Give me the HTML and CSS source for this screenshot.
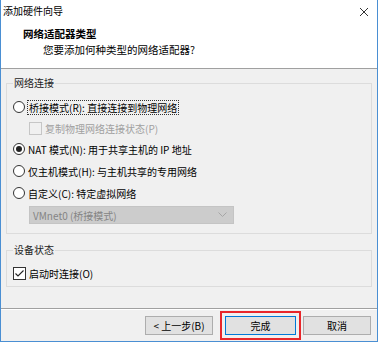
FILE: index.html
```html
<!DOCTYPE html>
<html lang="zh-CN">
<head>
    <meta charset="UTF-8">
    <meta name="viewport" content="width=device-width, initial-scale=1.0">
    <title>添加硬件向导</title>
    <link rel="stylesheet" href="styles.css">
</head>
<body>
<div class="window">
    <!-- Title bar -->
    <div class="titlebar">
        <span class="title">添加硬件向导</span>
        <svg class="close" width="10" height="10" viewBox="0 0 10 10">
            <path d="M1 1 L9 9 M9 1 L1 9" stroke="#333" stroke-width="1" fill="none"/>
        </svg>
    </div>

    <!-- Wizard header -->
    <div class="header">
        <div class="header-title">网络适配器类型</div>
        <div class="header-sub">您要添加何种类型的网络适配器?</div>
    </div>

    <div class="content">
        <fieldset class="group group-net">
            <legend>网络连接</legend>
            <div class="row">
                <span class="radio"></span>
                <span class="label focus">桥接模式(R): 直接连接到物理网络</span>
            </div>
            <div class="row row-sub">
                <span class="check disabled"></span>
                <span class="label disabled-text">复制物理网络连接状态(P)</span>
            </div>
            <div class="row">
                <span class="radio checked"></span>
                <span class="label">NAT 模式(N): 用于共享主机的 IP 地址</span>
            </div>
            <div class="row">
                <span class="radio"></span>
                <span class="label">仅主机模式(H): 与主机共享的专用网络</span>
            </div>
            <div class="row">
                <span class="radio"></span>
                <span class="label">自定义(C): 特定虚拟网络</span>
            </div>
            <div class="select">
                <span>VMnet0 (桥接模式)</span>
                <svg width="9" height="6" viewBox="0 0 9 6">
                    <path d="M0.5 0.5 L4.5 4.5 L8.5 0.5" stroke="#a6a6a6" stroke-width="1" fill="none"/>
                </svg>
            </div>
        </fieldset>

        <fieldset class="group group-dev">
            <legend>设备状态</legend>
            <div class="row row-dev">
                <span class="check">
                    <svg width="11" height="11" viewBox="0 0 11 11">
                        <path d="M1.5 5.5 L4 8 L9.5 2.5" stroke="#222" stroke-width="1.1" fill="none"/>
                    </svg>
                </span>
                <span class="label">启动时连接(O)</span>
            </div>
        </fieldset>
    </div>

    <div class="footer">
        <button class="btn btn-back">&lt; 上一步(B)</button>
        <button class="btn btn-default">完成</button>
        <button class="btn">取消</button>
    </div>
</div>
</body>
</html>
```

FILE: styles.css
```css
body {
    margin: 0;
    font-family: "Noto Sans CJK SC", "Liberation Sans", sans-serif;
    font-size: 10px;
    color: #000;
    background: #fff;
}
.window {
    width: 376px;
    height: 341px;
    border: 1px solid #4a8fd3;
    border-top: none;
    background: #f0f0f0;
    display: flex;
    flex-direction: column;
}
.titlebar {
    height: 23px;
    background: #fff;
    display: flex;
    align-items: center;
    justify-content: space-between;
    padding: 0 8px 0 2px;
}
.title {
    line-height: 14px;
    margin-top: -1px;
}
.header {
    height: 45px;
    background: #fff;
    border-bottom: 1px solid #a0a0a0;
}
.header-title {
    font-weight: bold;
    font-size: 10.5px;
    line-height: 14px;
    padding-left: 22px;
    margin-top: 4px;
}
.header-sub {
    font-size: 10.5px;
    line-height: 14px;
    padding-left: 42px;
    margin-top: 2px;
}
.content {
    flex: 1;
    padding: 8px 5px 0 5px;
    border-bottom: 1px solid #a0a0a0;
}
.group {
    margin: 0;
    border: 1px solid #dcdcdc;
    padding: 0 6px;
}
.group legend {
    padding: 0 1px;
    margin-left: 0;
    line-height: 12px;
    color: #1e1e1e;
}
.group-net {
    padding-top: 7px;
    padding-bottom: 9px;
}
.group-dev {
    margin-top: 10px;
    padding-top: 7px;
    padding-bottom: 3px;
}
.row {
    height: 22px;
    display: flex;
    align-items: center;
}
.row-sub {
    height: 20px;
    padding-left: 16px;
}
.row-dev {
    height: 20px;
}
.radio {
    width: 10px;
    height: 10px;
    border: 1px solid #333;
    border-radius: 50%;
    background: #fff;
    display: flex;
    align-items: center;
    justify-content: center;
    flex-shrink: 0;
}
.radio.checked::after {
    content: "";
    width: 6px;
    height: 6px;
    border-radius: 50%;
    background: #222;
}
.check {
    width: 11px;
    height: 11px;
    border: 1px solid #333;
    background: #fff;
    display: flex;
    flex-shrink: 0;
}
.check.disabled {
    border-color: #c6c6c6;
    background: #f0f0f0;
}
.label {
    margin-left: 3px;
    line-height: 13px;
    white-space: nowrap;
}
.focus {
    outline: 1px dotted #333;
    padding: 0 1px;
}
.disabled-text {
    color: #a0a0a0;
}
.select {
    margin: 2px 0 0 16px;
    width: 194px;
    height: 16px;
    border: 1px solid #c4c4c4;
    background: #cccccc;
    color: #848484;
    display: flex;
    align-items: center;
    justify-content: space-between;
    padding: 0 6px 0 3px;
    line-height: 13px;
}
.footer {
    height: 31px;
    border-top: 1px solid #fff;
    display: flex;
    align-items: center;
    justify-content: flex-end;
    padding-right: 6px;
}
.btn {
    width: 68px;
    height: 19px;
    padding: 0;
    margin-left: 7px;
    border: 1px solid #adadad;
    background: #e1e1e1;
    font-family: inherit;
    font-size: 10px;
    color: #000;
}
.btn-back {
    margin-right: 5px;
}
.btn-default {
    width: 71px;
    border-color: #0078d7;
    outline: 2px solid #e8262a;
    outline-offset: 3px;
}
```
